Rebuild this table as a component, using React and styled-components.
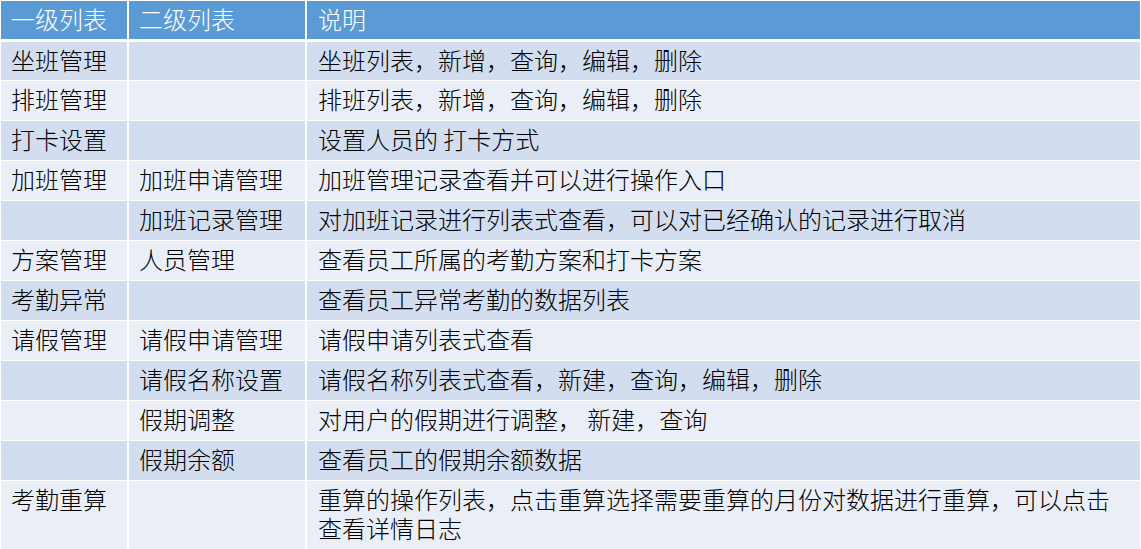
import React from "react";
import styled, { createGlobalStyle } from "styled-components";

const Global = createGlobalStyle`
  html, body { margin: 0; padding: 0; background: #ffffff; }
  body {
    font-family: "Noto Sans CJK SC", "Liberation Sans", sans-serif;
  }
`;

const Table = styled.div`
  display: flex;
  flex-direction: column;
  gap: 1px;
  width: 1141px;
  box-sizing: border-box;
  padding: 1px 1px 0 1px;
  background: #ffffff;
`;

const Row = styled.div`
  display: grid;
  grid-template-columns: 126px 176px 1fr;
  column-gap: 2px;
  height: ${(p) => p.$height || 39}px;
  margin-bottom: ${(p) => p.$after || 0}px;
`;

const Cell = styled.div`
  box-sizing: border-box;
  padding: 3px 8px 0 10px;
  font-size: 24px;
  font-weight: 300;
  line-height: 29px;
  white-space: nowrap;
  background: ${(p) =>
    p.$tone === "head" ? "#5b9bd5" : p.$tone === "dark" ? "#d2deef" : "#eaeff7"};
  color: ${(p) => (p.$tone === "head" ? "#ffffff" : "#000000")};
  padding-left: ${(p) => p.$pl || 10}px;
`;

const Line = styled.div`
  height: 29px;
`;

const rows = [
  ["坐班管理", "", "坐班列表，新增，查询，编辑，删除"],
  ["排班管理", "", "排班列表，新增，查询，编辑，删除"],
  ["打卡设置", "", "设置人员的 打卡方式"],
  ["加班管理", "加班申请管理", "加班管理记录查看并可以进行操作入口"],
  ["", "加班记录管理", "对加班记录进行列表式查看，可以对已经确认的记录进行取消"],
  ["方案管理", "人员管理", "查看员工所属的考勤方案和打卡方案"],
  ["考勤异常", "", "查看员工异常考勤的数据列表"],
  ["请假管理", "请假申请管理", "请假申请列表式查看"],
  ["", "请假名称设置", "请假名称列表式查看，新建，查询，编辑，删除"],
  ["", "假期调整", "对用户的假期进行调整， 新建，查询"],
  ["", "假期余额", "查看员工的假期余额数据"],
];

export default function App() {
  return (
    <>
      <Global />
      <Table>
        <Row $height={38} $after={2}>
          <Cell $tone="head">一级列表</Cell>
          <Cell $tone="head">二级列表</Cell>
          <Cell $tone="head" $pl={11}>说明</Cell>
        </Row>
        {rows.map((r, i) => {
          const tone = i % 2 === 0 ? "dark" : "light";
          return (
            <Row key={i} $height={i === 0 ? 38 : 39}>
              <Cell $tone={tone}>{r[0]}</Cell>
              <Cell $tone={tone}>{r[1]}</Cell>
              <Cell $tone={tone} $pl={11}>{r[2]}</Cell>
            </Row>
          );
        })}
        <Row $height={68}>
          <Cell $tone="light">考勤重算</Cell>
          <Cell $tone="light"></Cell>
          <Cell $tone="light" $pl={11}>
            <Line>重算的操作列表，点击重算选择需要重算的月份对数据进行重算，可以点击</Line>
            <Line>查看详情日志</Line>
          </Cell>
        </Row>
      </Table>
    </>
  );
}
